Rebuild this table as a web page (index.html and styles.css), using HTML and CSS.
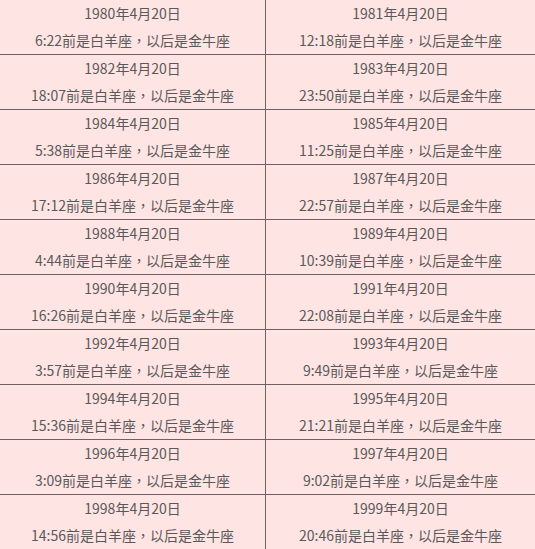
FILE: index.html
```html
<!DOCTYPE html>
<html>
<head>
<meta charset="utf-8">
<link rel="stylesheet" href="styles.css">
</head>
<body>
<div class="table">
  <div class="cell left"><p>1980年4月20日</p><p>6:22前是白羊座<span class="comma">，</span>以后是金牛座</p></div>
  <div class="cell right"><p>1981年4月20日</p><p>12:18前是白羊座<span class="comma">，</span>以后是金牛座</p></div>
  <div class="cell left"><p>1982年4月20日</p><p>18:07前是白羊座<span class="comma">，</span>以后是金牛座</p></div>
  <div class="cell right"><p>1983年4月20日</p><p>23:50前是白羊座<span class="comma">，</span>以后是金牛座</p></div>
  <div class="cell left"><p>1984年4月20日</p><p>5:38前是白羊座<span class="comma">，</span>以后是金牛座</p></div>
  <div class="cell right"><p>1985年4月20日</p><p>11:25前是白羊座<span class="comma">，</span>以后是金牛座</p></div>
  <div class="cell left"><p>1986年4月20日</p><p>17:12前是白羊座<span class="comma">，</span>以后是金牛座</p></div>
  <div class="cell right"><p>1987年4月20日</p><p>22:57前是白羊座<span class="comma">，</span>以后是金牛座</p></div>
  <div class="cell left"><p>1988年4月20日</p><p>4:44前是白羊座<span class="comma">，</span>以后是金牛座</p></div>
  <div class="cell right"><p>1989年4月20日</p><p>10:39前是白羊座<span class="comma">，</span>以后是金牛座</p></div>
  <div class="cell left"><p>1990年4月20日</p><p>16:26前是白羊座<span class="comma">，</span>以后是金牛座</p></div>
  <div class="cell right"><p>1991年4月20日</p><p>22:08前是白羊座<span class="comma">，</span>以后是金牛座</p></div>
  <div class="cell left"><p>1992年4月20日</p><p>3:57前是白羊座<span class="comma">，</span>以后是金牛座</p></div>
  <div class="cell right"><p>1993年4月20日</p><p>9:49前是白羊座<span class="comma">，</span>以后是金牛座</p></div>
  <div class="cell left"><p>1994年4月20日</p><p>15:36前是白羊座<span class="comma">，</span>以后是金牛座</p></div>
  <div class="cell right"><p>1995年4月20日</p><p>21:21前是白羊座<span class="comma">，</span>以后是金牛座</p></div>
  <div class="cell left"><p>1996年4月20日</p><p>3:09前是白羊座<span class="comma">，</span>以后是金牛座</p></div>
  <div class="cell right"><p>1997年4月20日</p><p>9:02前是白羊座<span class="comma">，</span>以后是金牛座</p></div>
  <div class="cell left last"><p>1998年4月20日</p><p>14:56前是白羊座<span class="comma">，</span>以后是金牛座</p></div>
  <div class="cell right last"><p>1999年4月20日</p><p>20:46前是白羊座<span class="comma">，</span>以后是金牛座</p></div>
</div>
</body>
</html>
```
FILE: styles.css
```css
html, body {
  margin: 0;
  padding: 0;
  background: #ffe4e4;
}
.table {
  display: grid;
  grid-template-columns: 266px 1fr;
  width: 535px;
  font-family: "Noto Sans CJK SC", "Noto Sans", sans-serif;
  font-size: 14px;
  color: #595959;
}
.cell {
  border-bottom: 1px solid #6e6262;
  text-align: center;
  height: 54px;
}
.cell.left {
  border-right: 1px solid #6e6262;
}
.cell.last {
  border-bottom: none;
}
.cell p {
  margin: 0;
  line-height: 27px;
  height: 27px;
  white-space: nowrap;
}
.comma {
  font-family: "Noto Sans CJK TC", sans-serif;
}
```
